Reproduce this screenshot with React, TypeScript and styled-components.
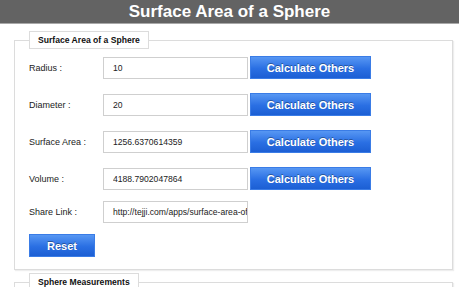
import React from 'react';
import styled, { createGlobalStyle } from 'styled-components';

const GlobalStyle = createGlobalStyle`
  html, body {
    margin: 0;
    padding: 0;
    background: #fff;
    font-family: "Liberation Sans", Arial, sans-serif;
  }
`;

const Header = styled.h1`
  margin: 0;
  height: 23px;
  line-height: 23px;
  background: #636363;
  border-bottom: 1px solid #a8a8a8;
  color: #fff;
  font-size: 17px;
  font-weight: bold;
  text-align: center;
`;

const Page = styled.div`
  padding: 0 6px 0 14px;
`;

const Fieldset = styled.fieldset<{ top: number }>`
  margin: ${props => props.top}px 0 0 0;
  padding: 0 14px 12px;
  border: 1px solid #dcdcdc;
  box-shadow: 1px 1px 1px #eee;
  min-width: 0;
`;

const Legend = styled.legend`
  box-sizing: border-box;
  height: 18px;
  line-height: 16px;
  padding: 0 8px;
  border: 1px solid #dcdcdc;
  background: #fff;
  font-size: 8.6px;
  font-weight: bold;
  color: #111;
`;

const Rows = styled.div`
  display: flex;
  flex-direction: column;
  padding-top: 7px;
`;

const Row = styled.div<{ gap: number }>`
  display: flex;
  align-items: center;
  margin-bottom: ${props => props.gap}px;
`;

const Label = styled.label`
  width: 74px;
  font-size: 9px;
  color: #222;
`;

const Field = styled.input`
  box-sizing: border-box;
  width: 145px;
  height: 22px;
  margin: 0 2px 0 0;
  padding: 0 0 0 9px;
  border: 1px solid #cfcfcf;
  font-family: "Liberation Sans", Arial, sans-serif;
  font-size: 8.6px;
  color: #222;
  outline: none;
`;

const BlueButton = styled.button<{ w: number }>`
  box-sizing: border-box;
  width: ${props => props.w}px;
  height: 23px;
  margin: 0;
  padding: 0;
  border: 1px solid #3a7ce6;
  background: linear-gradient(#5797f3, #2a6fe3 55%, #1c5fd4);
  color: #fff;
  font-family: "Liberation Sans", Arial, sans-serif;
  font-size: 11px;
  font-weight: bold;
  text-shadow: 0 -1px 0 rgba(0, 0, 0, 0.35);
  cursor: pointer;
`;

const rows = [
  { label: 'Radius :', value: '10' },
  { label: 'Diameter :', value: '20' },
  { label: 'Surface Area :', value: '1256.6370614359' },
  { label: 'Volume :', value: '4188.7902047864' },
];

const App = () => {
  return (
    <>
      <GlobalStyle />
      <Header>Surface Area of a Sphere</Header>
      <Page>
        <Fieldset top={7}>
          <Legend>Surface Area of a Sphere</Legend>
          <Rows>
            {rows.map((r, i) => (
              <Row key={r.label} gap={i < 3 ? 14 : 11}>
                <Label>{r.label}</Label>
                <Field defaultValue={r.value} />
                <BlueButton w={121}>Calculate Others</BlueButton>
              </Row>
            ))}
            <Row gap={11}>
              <Label>Share Link :</Label>
              <Field defaultValue="http://tejji.com/apps/surface-area-of-a-sphere" />
            </Row>
            <Row gap={0}>
              <BlueButton w={66}>Reset</BlueButton>
            </Row>
          </Rows>
        </Fieldset>
        <Fieldset top={3}>
          <Legend>Sphere Measurements</Legend>
          <Rows />
        </Fieldset>
      </Page>
    </>
  );
};

export default App;
